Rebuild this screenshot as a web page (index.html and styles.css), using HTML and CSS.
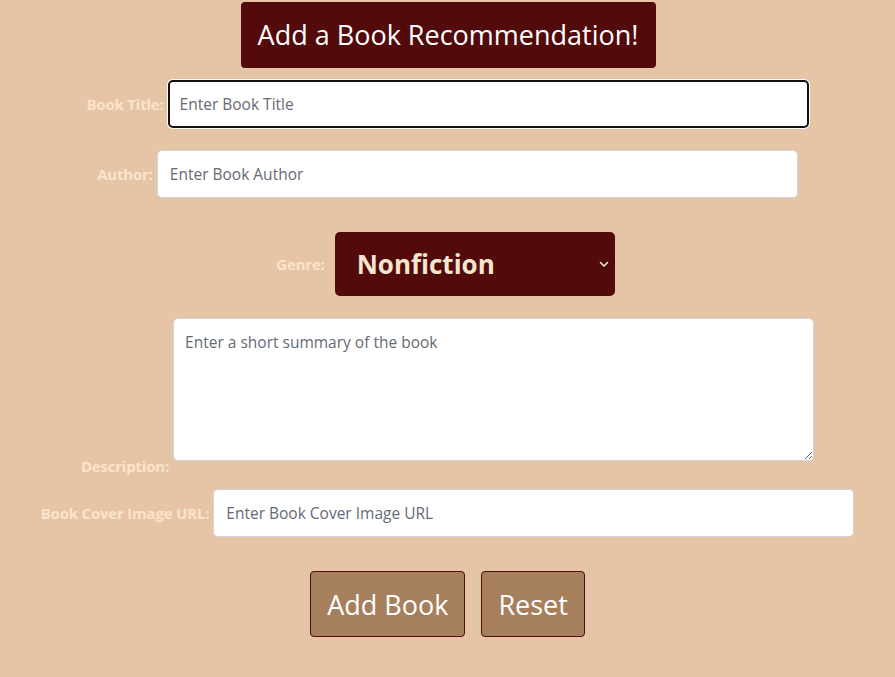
FILE: index.html
```html
<!DOCTYPE html>
<html>
<head>
<meta charset="utf-8">
<link rel="stylesheet" href="styles.css">
</head>
<body>
<div class="page">
  <h1 class="title">Add a Book Recommendation!</h1>
  <form class="form">
    <div class="row row-title">
      <label class="lbl">Book Title:</label>
      <input class="field focused" type="text" placeholder="Enter Book Title">
    </div>
    <div class="row row-author">
      <label class="lbl">Author:</label>
      <input class="field" type="text" placeholder="Enter Book Author">
    </div>
    <div class="row row-genre">
      <label class="lbl">Genre:</label>
      <select class="genre">
        <option>Nonfiction</option>
        <option>Fiction</option>
      </select>
    </div>
    <div class="row row-desc">
      <label class="lbl">Description:</label>
      <textarea class="field area" placeholder="Enter a short summary of the book"></textarea>
    </div>
    <div class="row row-url">
      <label class="lbl">Book Cover Image URL:</label>
      <input class="field" type="text" placeholder="Enter Book Cover Image URL">
    </div>
    <div class="buttons">
      <button type="button" class="btn">Add Book</button>
      <button type="button" class="btn">Reset</button>
    </div>
  </form>
</div>
</body>
</html>
```
FILE: styles.css
```css
html, body {
  margin: 0;
  padding: 0;
  background: #e6c5a7;
  font-family: "Segoe UI", "Open Sans", "Noto Sans", sans-serif;
}
.page {
  width: 895px;
  height: 677px;
  display: flex;
  flex-direction: column;
  align-items: center;
  padding-top: 2px;
  box-sizing: border-box;
}
.title {
  margin: 0 0 0 1px;
  width: 415px;
  height: 66px;
  box-sizing: border-box;
  background: #520a0a;
  color: #ffffff;
  font-weight: 400;
  font-size: 27px;
  line-height: 66px;
  text-align: center;
  border-radius: 4px;
}
.form {
  display: flex;
  flex-direction: column;
  align-items: center;
  width: 100%;
}
.row {
  display: flex;
  align-items: center;
  justify-content: center;
  width: 100%;
}
.lbl {
  color: #fae4cb;
  font-weight: 700;
  font-size: 15px;
  margin-right: 4px;
  letter-spacing: -0.2px;
}
.field {
  width: 641px;
  height: 48px;
  box-sizing: border-box;
  border: 1px solid #d2d4d6;
  border-radius: 5px;
  background: #fff;
  padding: 0 12px;
  font-family: inherit;
  font-size: 15.5px;
  color: #212529;
  outline: none;
}
.field::placeholder {
  color: #656b75;
  opacity: 1;
}
.focused {
  border: 2px solid #111;
  box-shadow: 0 0 0 1px #fff;
  padding-left: 10px;
}
.row-title { margin-top: 12px; }
.row-author { margin-top: 22px; }
.row-genre { margin-top: 34px; padding-right: 4px; box-sizing: border-box; }
.row-genre .lbl { margin-right: 10px; }
.genre {
  width: 280px;
  height: 64px;
  box-sizing: border-box;
  appearance: none;
  -webkit-appearance: none;
  border: none;
  border-radius: 5px;
  background-color: #520a0a;
  background-image: url("data:image/svg+xml,%3Csvg xmlns='http://www.w3.org/2000/svg' width='10' height='7' viewBox='0 0 10 7'%3E%3Cpath d='M1.5 1.5 L5 5 L8.5 1.5' fill='none' stroke='%23f5e6d0' stroke-width='1.6' stroke-linecap='round' stroke-linejoin='round'/%3E%3C/svg%3E");
  background-repeat: no-repeat;
  background-position: right 6px center;
  background-size: 10px 7px;
  color: #f5e6d0;
  font-family: inherit;
  font-weight: 700;
  font-size: 26px;
  padding: 0 22px;
  outline: none;
}
.row-desc {
  margin-top: 22px;
  align-items: flex-end;
}
.row-desc .lbl { margin-bottom: -15px; }
.area {
  height: 143px;
  padding: 12px 11px;
  resize: both;
  display: block;
}
.row-url { margin-top: 28px; }
.buttons {
  display: flex;
  gap: 16px;
  margin-top: 34px;
  justify-content: center;
}
.btn {
  height: 66px;
  box-sizing: border-box;
  background: #a67f5d;
  border: 1px solid #520a0a;
  border-radius: 4px;
  color: #fff;
  font-family: inherit;
  font-size: 27px;
  padding: 0 16px;
}
```
